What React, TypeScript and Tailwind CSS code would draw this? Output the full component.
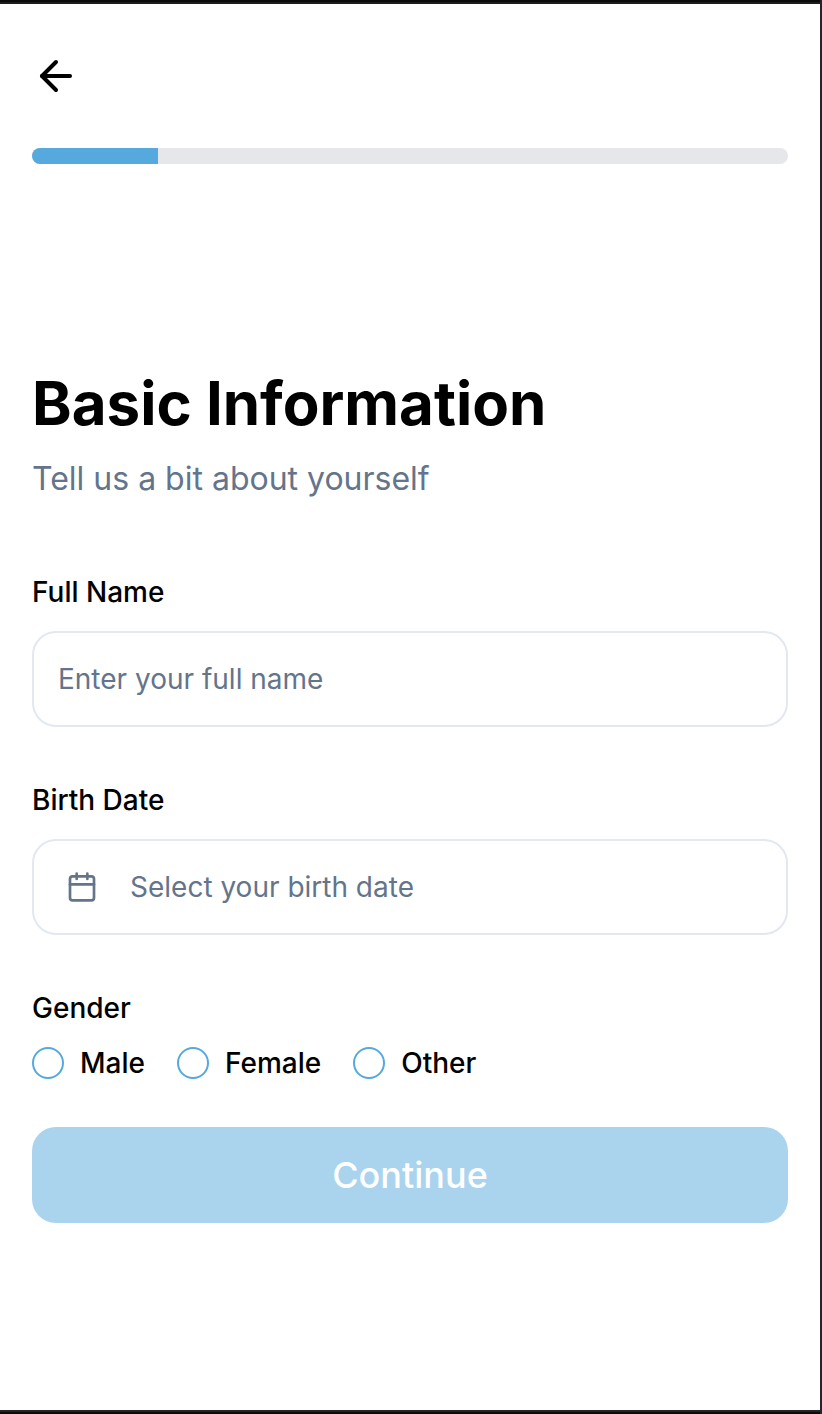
import { ArrowLeft, Calendar } from "lucide-react";

const genders = ["Male", "Female", "Other"];

export default function App() {
  return (
    <div className="flex h-[1414px] w-[822px] flex-col border-r-2 border-[#24242b] bg-white font-['Inter',sans-serif] text-black">
      <div className="h-1 shrink-0 border-b-2 border-[#1c1c1c] bg-[#0a0a0a]" />
      <div className="flex-1 px-8">
        <header className="pt-12">
          <button className="flex size-12 items-center justify-center" aria-label="Back">
            <ArrowLeft size={48} strokeWidth={2} />
          </button>
          <div className="mt-12 h-4 w-full overflow-hidden rounded-full bg-[#e5e7eb]">
            <div className="h-full w-1/6 bg-[#55a9dd]" />
          </div>
        </header>
        <main className="pt-[203px]">
          <h1 className="text-[60px] leading-[72px] font-bold">Basic Information</h1>
          <p className="mt-4 text-[32px] leading-[48px] text-[#64748b]">Tell us a bit about yourself</p>
          <form className="mt-[75px]" onSubmit={(e) => e.preventDefault()}>
            <label className="block text-[28px] leading-7 font-medium">Full Name</label>
            <input
              className="mt-[25px] block h-24 w-full rounded-3xl border-2 border-[#e2e8f0] px-6 text-[28px] placeholder:text-[#64748b]"
              placeholder="Enter your full name"
            />
            <label className="mt-[59px] block text-[28px] leading-7 font-medium">Birth Date</label>
            <button className="mt-[25px] flex h-24 w-full items-center gap-8 rounded-3xl border-2 border-[#e2e8f0] px-8 text-[28px] text-[#64748b]">
              <Calendar size={32} strokeWidth={2} />
              Select your birth date
            </button>
            <div className="mt-[59px] text-[28px] leading-7 font-medium">Gender</div>
            <div className="mt-[25px] flex h-8 gap-8">
              {genders.map((g) => (
                <label key={g} className="flex items-center gap-4 text-[28px] leading-7 font-medium">
                  <span className="size-8 rounded-full border-2 border-[#55a9dd]" />
                  {g}
                </label>
              ))}
            </div>
            <button className="mt-12 h-24 w-full rounded-3xl bg-[#aad3ee] text-[36px] font-medium text-white">Continue</button>
          </form>
        </main>
      </div>
      <div className="h-1 shrink-0 border-t-2 border-[#242424] bg-[#0a0a0a]" />
    </div>
  );
}
